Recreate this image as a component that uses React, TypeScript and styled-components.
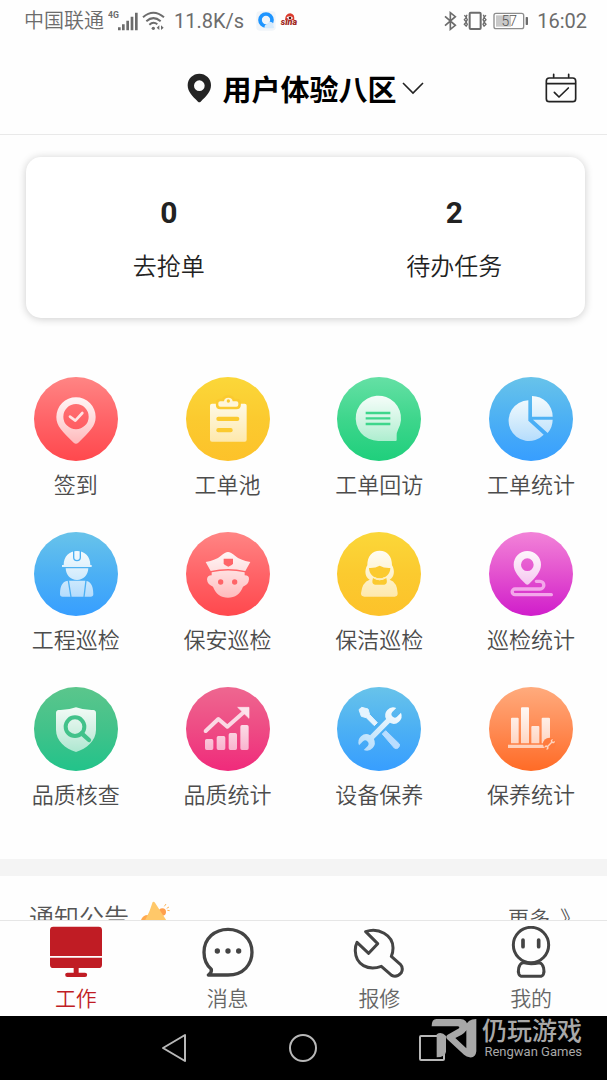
import React from "react";
import styled, { createGlobalStyle } from "styled-components";

const GlobalStyle = createGlobalStyle`
  * { box-sizing: border-box; }
  body { margin: 0; background: #fff; }
  button { border: 0; padding: 0; background: none; font: inherit; color: inherit; cursor: pointer; }
  svg { display: block; flex: none; }
`;

const Screen = styled.div`
  display: flex;
  flex-direction: column;
  height: 100vh;
  background: #fefefe;
  color: #222;
  font-family: Roboto, "Noto Sans CJK SC", sans-serif;
`;

const StatusBar = styled.div`
  display: flex;
  align-items: center;
  justify-content: space-between;
  height: 42px;
  padding: 0 20px 0 24px;
  color: #6c6c6c;
  font-size: 20px;
  font-weight: 350;
  line-height: 24px;
`;

const StatusGroup = styled.div<{ $gap: number }>`
  display: flex;
  align-items: center;
  gap: ${(p) => p.$gap}px;
`;

const StatusValue = styled.span`
  font-weight: 400;
  margin-left: 5px;
  margin-right: 8px;
`;

const Clock = styled.time`
  font-weight: 400;
  margin-left: 2px;
`;

const Header = styled.header`
  display: grid;
  grid-template-columns: 1fr auto 1fr;
  align-items: center;
  height: 93px;
  padding: 0 30px 0 34px;
  border-bottom: 1px solid #e9e9e9;
`;

const LocationButton = styled.button`
  grid-column: 2;
  display: flex;
  align-items: center;
`;

const LocationName = styled.span`
  margin: 0 5px 0 10px;
  padding-top: 5px;
  color: #000;
  font-size: 29px;
  font-weight: 700;
  line-height: 40px;
`;

const CalendarButton = styled.button`
  justify-self: end;
`;

const Content = styled.main`
  flex: 1;
  min-height: 0;
  overflow: hidden auto;
  scrollbar-width: none;
`;

const SummaryCard = styled.section`
  margin: 22px 22px 0 26px;
  padding: 40px 0 35px;
  border-radius: 15px;
  background: #fff;
  box-shadow: 0 1px 9px rgba(0, 0, 0, 0.2);
`;

const SummaryGrid = styled.div`
  display: grid;
  grid-template-columns: 1fr 1fr;
  margin-right: -12px;
`;

const SummaryItem = styled.button`
  display: flex;
  flex-direction: column;
  align-items: center;
  gap: 22px;
  line-height: 32px;
`;

const SummaryCount = styled.strong`
  font-size: 30px;
  font-weight: 700;
`;

const SummaryLabel = styled.span`
  font-size: 24px;
  font-weight: 350;
`;

const MenuGrid = styled.nav`
  display: grid;
  grid-template-columns: repeat(4, 1fr);
  row-gap: 30px;
  padding: 59px 0 47px;
`;

const MenuItem = styled.button`
  display: flex;
  flex-direction: column;
  align-items: center;
  gap: 9px;
`;

const MenuLabel = styled.span`
  color: #4c4c4c;
  font-size: 22px;
  font-weight: 350;
  line-height: 32px;
`;

const Notice = styled.section`
  display: flex;
  justify-content: space-between;
  padding: 25px 26px 24px 29px;
  border-top: 17px solid #f4f4f4;
`;

const NoticeTitle = styled.h2`
  display: flex;
  align-items: flex-start;
  gap: 12px;
  margin: 0;
  color: #555;
  font-size: 25px;
  font-weight: 350;
  line-height: 36px;
`;

const MoreLink = styled.a`
  display: flex;
  gap: 10px;
  color: #555;
  font-size: 21px;
  font-weight: 350;
  line-height: 36px;
  text-decoration: none;
`;

const TabBar = styled.nav`
  display: grid;
  grid-template-columns: repeat(4, 1fr);
  height: 96px;
  border-top: 1px solid #e6e6e6;
  background: #fefefe;
`;

const Tab = styled.button<{ $active?: boolean }>`
  display: flex;
  flex-direction: column;
  align-items: center;
  gap: 5px;
  padding-top: 5px;
  color: ${(p) => (p.$active ? "#c01c24" : "#666")};
  font-size: 21px;
  font-weight: 350;
  line-height: 32px;
`;

const SystemNav = styled.footer`
  position: relative;
  display: flex;
  justify-content: center;
  align-items: center;
  gap: 101px;
  height: 64px;
  padding-right: 2px;
  background: #000;
`;

const Watermark = styled.div`
  position: absolute;
  right: 25px;
  top: 0;
  display: flex;
  gap: 5px;
  color: #a8a8a8;
  pointer-events: none;
`;

const WatermarkText = styled.div`
  display: flex;
  flex-direction: column;
  align-items: flex-end;
  font-size: 13px;
  line-height: 20px;
`;

const WatermarkName = styled.span`
  font-family: "Noto Sans CJK SC", sans-serif;
  font-size: 25px;
  font-weight: 500;
  line-height: 26px;
`;

type Palette = { top: string; mid: string; bottom: string };

const red: Palette = { top: "#ff8584", mid: "#ff6468", bottom: "#ff484d" };
const yellow: Palette = { top: "#fbd739", mid: "#fbca2f", bottom: "#fdc22a" };
const green: Palette = { top: "#65e0a5", mid: "#3ed68c", bottom: "#1fcf7c" };
const blue: Palette = { top: "#68c3ea", mid: "#4cb0f4", bottom: "#379eff" };
const magenta: Palette = { top: "#f283d8", mid: "#e351cf", bottom: "#d01dcb" };
const teal: Palette = { top: "#5bc68c", mid: "#42c28a", bottom: "#22c38a" };
const pink: Palette = { top: "#ee6790", mid: "#ee4b84", bottom: "#f02a7b" };
const orange: Palette = { top: "#ffab7d", mid: "#ff8b54", bottom: "#ff6b26" };

/* Double-ended spanner, lying flat around the origin. */
const SPANNER =
  "M34 -8A24 24 0 0 1 79 -10H62Q53 -9 53 0T62 10H79A24 24 0 0 1 34 8H-34A24 24 0 0 1 -79 10H-62Q-53 9 -53 0T-62 -10H-79A24 24 0 0 1 -34 -8z";

type Entry = { id: string; label: string; palette: Palette; draw: (fill: string, back: string) => React.ReactNode };

const entries: Entry[] = [
  {
    id: "checkin",
    label: "签到",
    palette: red,
    draw: (f) => (
      <>
        <path fill={f} fillRule="evenodd" d="M126 61a59 59 0 0 1 59 59c0 27-18 44-52 77q-7 6-14 0C85 164 67 147 67 120a59 59 0 0 1 59-59zM126 81a38 38 0 1 0 0 76a38 38 0 1 0 0-76z" />
        <path d="M108 119L124 131L145 108" fill="none" stroke="#ffe3e3" strokeWidth="8" strokeLinecap="round" strokeLinejoin="round" />
      </>
    ),
  },
  {
    id: "pool",
    label: "工单池",
    palette: yellow,
    draw: (f, b) => (
      <>
        <rect x="72" y="80" width="110" height="114" rx="6" fill={f} />
        <rect x="91" y="119" width="69" height="13" rx="6" fill={b} />
        <rect x="91" y="153" width="49" height="13" rx="6" fill={b} />
        <path d="M97 78q0-5 6-5h11q1-11 13-11t13 11h11q6 0 6 5v5q0 6-6 6h-48q-6 0-6-6z" fill={b} stroke={b} strokeWidth="15" strokeLinejoin="round" />
        <path d="M97 78q0-5 6-5h11q1-11 13-11t13 11h11q6 0 6 5v5q0 6-6 6h-48q-6 0-6-6z" fill="#fff6d8" />
        <circle cx="127" cy="72" r="5" fill={b} />
      </>
    ),
  },
  {
    id: "callback",
    label: "工单回访",
    palette: green,
    draw: (f, b) => (
      <>
        <path fill={f} d="M124 192A68 68 0 1 1 183 158Q179 166 179 175V189Q179 192 176 192z" />
        <path d="M86 108H160M86 124H160M86 141H160" stroke={b} strokeWidth="7" />
      </>
    ),
  },
  {
    id: "orderStats",
    label: "工单统计",
    palette: blue,
    draw: (f) => <path fill={f} d="M118 70V131L164 173A61 61 0 1 1 118 70zM129 57A62 62 0 0 1 191 119H129zM132 128H191A62 62 0 0 1 176 168z" />,
  },
  {
    id: "engineering",
    label: "工程巡检",
    palette: blue,
    draw: (f, b) => (
      <>
        <path fill={f} d="M89 99C89 73 106 57 129 57S169 73 169 99H173V105H84V99zM95 109H163C162 130 148 144 129 144S96 130 95 109zM78 186C78 158 88 146 104 146H152C168 146 178 158 178 186Q178 194 170 194H86Q78 194 78 186z" />
        <path d="M119 56V76a10 10 0 0 0 20 0V56" fill="none" stroke={b} strokeWidth="4" />
        <path d="M103 145L111 195M156 145L150 195" stroke={b} strokeWidth="4" />
      </>
    ),
  },
  {
    id: "security",
    label: "保安巡检",
    palette: red,
    draw: (f, b) => (
      <>
        <path fill={f} d="M59 90Q90 84 104 72Q118 60 126 60Q134 60 148 72Q162 84 193 90L178 117Q126 105 74 117zM77 121Q126 110 176 121V130Q190 130 189 142Q188 158 171 164C163 186 147 197 126 197S89 186 81 164Q64 158 63 142Q64 130 77 130z" />
        <path d="M113 80H141V94Q140 100 127 104Q114 100 113 94z" fill={b} />
        <circle cx="104" cy="150" r="8" fill={b} />
        <circle cx="146" cy="150" r="8" fill={b} />
      </>
    ),
  },
  {
    id: "cleaning",
    label: "保洁巡检",
    palette: yellow,
    draw: (f, b) => (
      <>
        <path fill={f} d="M128 56C151 56 165 73 165 100C174 114 173 136 158 143Q181 151 182 184Q182 194 173 194H82Q72 194 72 184Q75 151 98 143C83 136 82 114 91 100C91 73 105 56 128 56z" />
        <path d="M96 108Q115 109 128 101Q141 109 160 108C160 126 145 139 128 139S96 126 96 108z" fill={b} />
        <path d="M108 138Q128 152 148 138Q153 157 142 158H114Q102 157 108 138z" fill={b} />
        <path d="M112 137Q128 147 144 137" fill="none" stroke="#feedb5" strokeWidth="5" />
      </>
    ),
  },
  {
    id: "patrolStats",
    label: "巡检统计",
    palette: magenta,
    draw: (f) => (
      <>
        <path d="M142 148H153a11 11 0 0 1 0 23H78a8 8 0 0 0 0 17H187" fill="none" stroke="#f3a6ea" strokeWidth="10" strokeLinecap="round" />
        <path fill={f} fillRule="evenodd" d="M115 57a41 41 0 0 1 41 41c0 20-16 38-36 58q-5 4-10 0C90 136 74 118 74 98a41 41 0 0 1 41-41zM115 79a19 19 0 1 0 0 38a19 19 0 1 0 0-38z" />
      </>
    ),
  },
  {
    id: "qualityCheck",
    label: "品质核查",
    palette: teal,
    draw: (f, b) => (
      <>
        <path fill={f} d="M126 61Q150 70 178 69Q186 70 186 78V128C186 162 158 184 126 195C94 184 66 162 66 128V78Q66 70 74 69Q102 70 126 61z" />
        <circle cx="123" cy="119" r="28" fill="none" stroke={b} strokeWidth="12" />
        <path d="M143 139L165 159" stroke={b} strokeWidth="13" strokeLinecap="round" />
      </>
    ),
  },
  {
    id: "qualityStats",
    label: "品质统计",
    palette: pink,
    draw: (f) => (
      <>
        <path d="M59 132L97 96L124 119L174 75" fill="none" stroke="#fbd8e4" strokeWidth="12" strokeLinecap="round" strokeLinejoin="round" />
        <path d="M155 61H189V94z" fill="#fde4ec" stroke="#fde4ec" strokeWidth="2" />
        <path fill={f} d="M62 156h15q5 0 5 5v23q0 5-5 5H62q-5 0-5-5v-23q0-5 5-5zM97 147h16q5 0 5 5v32q0 5-5 5H97q-5 0-5-5v-32q0-5 5-5zM133 138h15q5 0 5 5v41q0 5-5 5h-15q-5 0-5-5v-41q0-5 5-5zM168 114h15q5 0 5 5v65q0 5-5 5h-15q-5 0-5-5v-65q0-5 5-5z" />
      </>
    ),
  },
  {
    id: "equipment",
    label: "设备保养",
    palette: blue,
    draw: (f) => (
      <>
        <path d="M66 68L74 61L93 66L98 83L121 107L112 116L88 92L73 88z" fill="#e6f4fe" stroke="#e6f4fe" strokeWidth="3" strokeLinejoin="round" />
        <path d="M136 141L146 131L187 171Q189 177 184 182T172 183z" fill="#b9ddff" stroke="#b9ddff" strokeWidth="3" strokeLinejoin="round" />
        <path d={SPANNER} fill={f} transform="translate(129 126) rotate(-45)" />
      </>
    ),
  },
  {
    id: "upkeepStats",
    label: "保养统计",
    palette: orange,
    draw: (f) => (
      <>
        <path fill={f} d="M69 92h17q3 0 3 3v74H66V95q0-3 3-3zM99 61h18q3 0 3 3v105H96V64q0-3 3-3zM130 117h18q3 0 3 3v49h-24v-49q0-3 3-3zM161 92h18q4 0 4 3v74h-25V95q0-3 3-3zM57 173H171V183H57z" />
        <circle cx="181" cy="171" r="19" fill="#ff7b3d" />
        <path d={SPANNER} fill="#ffd3bd" transform="translate(182 172) rotate(-45) scale(0.23 0.27)" />
      </>
    ),
  },
];

function EntryIcon({ entry }: { entry: Entry }) {
  const { id, palette } = entry;
  const flatGlyph = id === "equipment";
  return (
    <svg width="84" height="84" viewBox="0 0 252 252" aria-hidden="true">
      <defs>
        <linearGradient id={`${id}-back`} x2="0" y2="1">
          <stop stopColor={palette.top} />
          <stop offset="0.5" stopColor={palette.mid} />
          <stop offset="1" stopColor={palette.bottom} />
        </linearGradient>
        <linearGradient id={`${id}-glyph`} gradientUnits="userSpaceOnUse" x1={flatGlyph ? 79 : 0} y1={flatGlyph ? 0 : 56} x2={flatGlyph ? -79 : 0} y2={flatGlyph ? 0 : 196}>
          <stop stopColor="#fff" stopOpacity="0.94" />
          <stop offset="1" stopColor="#fff" stopOpacity="0.6" />
        </linearGradient>
      </defs>
      <circle cx="126" cy="126" r="126" fill={`url(#${id}-back)`} />
      {entry.draw(`url(#${id}-glyph)`, palette.mid)}
    </svg>
  );
}

const SignalIcon = () => (
  <svg width="30" height="22" viewBox="0 0 90 66" fill="#6c6c6c" aria-hidden="true">
    <text x="0" y="24" fontFamily="Roboto" fontWeight="700" fontSize="26">4G</text>
    <path d="M30 52h8v9h-8zM42 43h8v18h-8zM55 32h8v29h-8zM68 20h8v41h-8zM81 8h8v53h-8z" />
  </svg>
);

const WifiIcon = () => (
  <svg width="23" height="20" viewBox="0 0 69 60" fill="none" stroke="#6c6c6c" strokeWidth="6" aria-hidden="true">
    <path d="M3 19Q34-8 66 19M13 31Q34 12 56 31M22 41Q34 30 46 40" />
    <circle cx="34" cy="52" r="5" fill="#6c6c6c" stroke="none" />
    <path d="M52 43v14l-8-7zM57 43v14l8-7z" fill="#6c6c6c" stroke="none" />
  </svg>
);

const BrowserIcon = () => (
  <svg width="20" height="20" viewBox="0 0 60 60" aria-hidden="true">
    <rect x="1" y="1" width="58" height="58" rx="10" fill="#f1f5f9" />
    <circle cx="30" cy="27" r="18" fill="none" stroke="#1e95ff" strokeWidth="11" />
    <path d="M26 51q-2-11 9-12q4-10 13-5q7 4 4 10q5 6-2 8H31z" fill="#d5eafc" />
  </svg>
);

const SinaIcon = () => (
  <svg width="20" height="20" viewBox="0 0 60 60" aria-hidden="true">
    <path d="M15 28Q15 8 31 7Q45 9 43 28" fill="#dc3b2d" />
    <ellipse cx="29" cy="21" rx="9" ry="5" fill="#fff" />
    <circle cx="30" cy="21" r="4" fill="#4c1c18" />
    <text x="2" y="43" fontFamily="Roboto" fontStyle="italic" fontWeight="900" fontSize="27" fill="#a02820">sina</text>
  </svg>
);

const BluetoothIcon = () => (
  <svg width="13" height="20" viewBox="0 0 39 60" fill="none" stroke="#6c6c6c" strokeWidth="5" aria-hidden="true">
    <path d="M3 16L34 43L19 55V5L34 17L3 44" />
  </svg>
);

const VibrateIcon = () => (
  <svg width="24" height="20" viewBox="0 0 72 60" fill="none" stroke="#6c6c6c" aria-hidden="true">
    <rect x="20" y="5" width="33" height="49" rx="3" strokeWidth="6" />
    <path d="M4 13l6 6-6 7 6 7-6 7 6 6M12 11l-3 8 4 7-4 7 4 7-4 7M69 13l-6 6 6 7-6 7 6 7-6 6M61 11l3 8-4 7 4 7-4 7 4 7" strokeWidth="4" />
  </svg>
);

const BatteryIcon = () => (
  <svg width="36" height="20" viewBox="0 0 108 60" aria-hidden="true">
    <rect x="3" y="7" width="89" height="46" rx="6" fill="none" stroke="#8d8d8d" strokeWidth="4" />
    <rect x="9" y="13" width="45" height="34" fill="#c8c8c8" />
    <rect x="98" y="18" width="7" height="24" rx="2" fill="#6c6c6c" />
    <text x="49" y="45" textAnchor="middle" fontFamily="Roboto" fontSize="42" fill="#555">57</text>
  </svg>
);

const PinIcon = () => (
  <svg width="25" height="30" viewBox="0 0 75 90" aria-hidden="true">
    <path fill="#242424" fillRule="evenodd" d="M37 2a35 35 0 0 1 35 35c0 19-14 33-31 49q-4 3-8 0C16 70 2 56 2 37A35 35 0 0 1 37 2zM37 22a16 16 0 1 0 0 32a16 16 0 1 0 0-32z" />
  </svg>
);

const ChevronIcon = () => (
  <svg width="22" height="14" viewBox="0 0 22 14" fill="none" stroke="#222" strokeWidth="1.6" aria-hidden="true">
    <path d="M1 2L11 12L21 2" />
  </svg>
);

const CalendarIcon = () => (
  <svg width="32" height="30" viewBox="0 0 96 90" fill="none" stroke="#222" strokeWidth="5" strokeLinecap="round" strokeLinejoin="round" aria-hidden="true">
    <rect x="4" y="15" width="88" height="71" rx="9" />
    <path d="M5 32H91M26 4V13M71 4V13M28 58L42 72L70 45" />
  </svg>
);

const HornIcon = () => (
  <svg width="29" height="32" viewBox="0 0 87 96" aria-hidden="true">
    <circle cx="64" cy="33" r="11" fill="#ff9f4c" />
    <path d="M0 57Q6 42 20 42L40 70L12 80z" fill="#ffa94f" />
    <path d="M35 3Q39 0 42 5L75 56Q76 64 68 65L10 62Q27 32 35 3z" fill="#ffc869" />
    <path d="M70 16L75 9M77 22L84 18M79 28L86 29" stroke="#ffb75c" strokeWidth="3" />
  </svg>
);

const MonitorIcon = () => (
  <svg width="52" height="52" viewBox="0 0 156 156" fill="#c01c24" aria-hidden="true">
    <path d="M10 2H146Q156 2 156 12V90H0V12Q0 2 10 2zM0 95H156V116Q156 126 146 126H86V140H105a6 6 0 0 1 0 13H52a6 6 0 0 1 0-13H71V126H10Q0 126 0 116z" />
  </svg>
);

const MessageIcon = () => (
  <svg width="52" height="52" viewBox="0 0 156 156" aria-hidden="true">
    <path d="M19 147H78C125 147 150 114 150 79C150 37 117 10 78 10S6 37 6 79C6 101 14 118 28 130Q30 139 19 147z" fill="none" stroke="#444" strokeWidth="10" strokeLinejoin="round" />
    <g fill="#444"><circle cx="46" cy="75" r="8" /><circle cx="78" cy="75" r="8" /><circle cx="110" cy="75" r="8" /></g>
  </svg>
);

const WrenchIcon = () => (
  <svg width="52" height="52" viewBox="0 0 156 156" fill="none" stroke="#444" strokeWidth="9" strokeLinejoin="round" aria-hidden="true">
    <path d="M38 17C75 3 121 27 120 67Q120 80 115 91L142 115Q152 126 145 140Q131 156 116 148L85 121C45 135 8 116 7 76Q6 61 12 49L47 82L74 53z" />
  </svg>
);

const PersonIcon = () => (
  <svg width="52" height="52" viewBox="0 0 156 156" fill="none" stroke="#444" strokeWidth="9" strokeLinecap="round" aria-hidden="true">
    <circle cx="78" cy="57" r="53" />
    <path d="M54 42V62M101 42V62" strokeWidth="11" />
    <path d="M54 110C40 114 38 136 42 145Q45 151 52 151H105Q112 151 115 145C119 136 117 114 103 110Q78 116 54 110z" strokeLinejoin="round" />
  </svg>
);

const tabs = [
  { label: "工作", icon: <MonitorIcon />, active: true },
  { label: "消息", icon: <MessageIcon /> },
  { label: "报修", icon: <WrenchIcon /> },
  { label: "我的", icon: <PersonIcon /> },
];

export default function App() {
  return (
    <Screen>
      <GlobalStyle />
      <StatusBar>
        <StatusGroup $gap={4}>
          <span>中国联通</span>
          <SignalIcon />
          <WifiIcon />
          <StatusValue>11.8K/s</StatusValue>
          <BrowserIcon />
          <SinaIcon />
        </StatusGroup>
        <StatusGroup $gap={6}>
          <BluetoothIcon />
          <VibrateIcon />
          <BatteryIcon />
          <Clock>16:02</Clock>
        </StatusGroup>
      </StatusBar>
      <Header>
        <LocationButton>
          <PinIcon />
          <LocationName>用户体验八区</LocationName>
          <ChevronIcon />
        </LocationButton>
        <CalendarButton aria-label="日程">
          <CalendarIcon />
        </CalendarButton>
      </Header>
      <Content>
        <SummaryCard>
          <SummaryGrid>
            <SummaryItem>
              <SummaryCount>0</SummaryCount>
              <SummaryLabel>去抢单</SummaryLabel>
            </SummaryItem>
            <SummaryItem>
              <SummaryCount>2</SummaryCount>
              <SummaryLabel>待办任务</SummaryLabel>
            </SummaryItem>
          </SummaryGrid>
        </SummaryCard>
        <MenuGrid>
          {entries.map((entry) => (
            <MenuItem key={entry.id}>
              <EntryIcon entry={entry} />
              <MenuLabel>{entry.label}</MenuLabel>
            </MenuItem>
          ))}
        </MenuGrid>
        <Notice>
          <NoticeTitle>
            通知公告
            <HornIcon />
          </NoticeTitle>
          <MoreLink href="#notices">
            更多<span>》</span>
          </MoreLink>
        </Notice>
      </Content>
      <TabBar>
        {tabs.map((tab) => (
          <Tab key={tab.label} $active={tab.active}>
            {tab.icon}
            <span>{tab.label}</span>
          </Tab>
        ))}
      </TabBar>
      <SystemNav>
        <button aria-label="返回">
          <svg width="26" height="30" viewBox="0 0 26 30" fill="none" stroke="#b8b8b8" strokeWidth="2" strokeLinejoin="round">
            <path d="M24 2V28L2 15z" />
          </svg>
        </button>
        <button aria-label="主屏幕">
          <svg width="30" height="30" viewBox="0 0 30 30" fill="none" stroke="#b8b8b8" strokeWidth="2">
            <circle cx="15" cy="15" r="13" />
          </svg>
        </button>
        <button aria-label="最近任务">
          <svg width="26" height="30" viewBox="0 0 26 30" fill="none" stroke="#b8b8b8" strokeWidth="2">
            <rect x="1" y="3" width="24" height="24" rx="1" />
          </svg>
        </button>
        <Watermark>
          <svg width="46" height="42" viewBox="0 0 138 126" fill="#a8a8a8" aria-hidden="true">
            <path d="M2 31Q2 9 16 9H88Q109 10 109 30Q109 46 92 56L73 66L106 97V30Q107 10 136 9V106Q134 126 116 124Q107 123 99 116L48 69Q42 61 50 56L84 37Q87 31 80 31z" />
            <path d="M17 55Q31 45 45 60V107Q43 123 17 124z" />
          </svg>
          <WatermarkText>
            <WatermarkName>仍玩游戏</WatermarkName>
            <span>Rengwan Games</span>
          </WatermarkText>
        </Watermark>
      </SystemNav>
    </Screen>
  );
}
